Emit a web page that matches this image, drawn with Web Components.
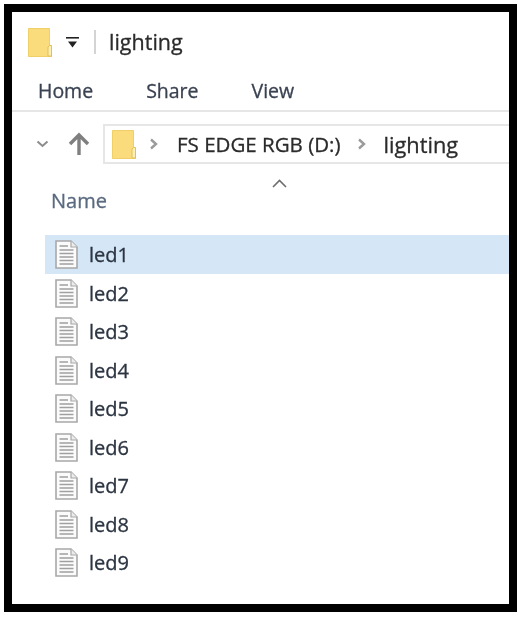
<!DOCTYPE html>
<html>
<head>
<meta charset="utf-8">
<title>lighting</title>
<style>
  html, body { margin: 0; padding: 0; background: #fff; }
  body { font-family: "Open Sans", "Noto Sans", sans-serif; color: #222; }
</style>
</head>
<body>
<explorer-frame>
  <title-bar label="lighting"></title-bar>
  <ribbon-tabs>
    <span>Home</span><span>Share</span><span>View</span>
  </ribbon-tabs>
  <address-bar drive="FS EDGE RGB (D:)" folder="lighting"></address-bar>
  <list-header>Name</list-header>
  <file-row selected>led1</file-row>
  <file-row>led2</file-row>
  <file-row>led3</file-row>
  <file-row>led4</file-row>
  <file-row>led5</file-row>
  <file-row>led6</file-row>
  <file-row>led7</file-row>
  <file-row>led8</file-row>
  <file-row>led9</file-row>
</explorer-frame>

<script>
const folderIcon = (w, h) => `
  <svg width="${w}" height="${h}" viewBox="0 0 24 29" style="display:block;flex:none">
    <path d="M0.5 0.5H21.5V24H24V28.5H0.5Z" fill="#fbdc7c" stroke="#f1cf68"/>
    <path d="M21.5 17.5H23.5V28H20V19Z" fill="#fdeeb4" stroke="#e3bf57" stroke-width="1"/>
  </svg>`;

class ExplorerFrame extends HTMLElement {
  constructor() {
    super();
    this.attachShadow({ mode: 'open' });
    this.shadowRoot.innerHTML = `
      <style>
        :host {
          display: block;
          box-sizing: border-box;
          width: 513px;
          height: 608px;
          margin: 4px 0 0 4px;
          border: 8px solid #000;
          background: #fff;
          overflow: hidden;
          filter: blur(0.45px);
          -webkit-text-stroke: 0.3px currentColor;
        }
      </style>
      <slot></slot>
    `;
  }
}

class TitleBar extends HTMLElement {
  constructor() {
    super();
    this.attachShadow({ mode: 'open' });
  }

  connectedCallback() {
    this.shadowRoot.innerHTML = `
      <style>
        :host {
          display: flex;
          align-items: center;
          height: 60px;
          padding: 0 0 0 16px;
          box-sizing: border-box;
        }
        .quick { margin-left: 14px; display: block; }
        .divider { width: 2px; height: 24px; background: #d4d4d4; margin: 0 13px 0 15px; }
        .label { font-size: 21.5px; color: #2b2b2b; position: relative; top: -1px; }
      </style>
      ${folderIcon(24, 29)}
      <svg class="quick" width="13" height="13" viewBox="0 0 13 13">
        <rect x="0" y="1" width="13" height="1.6" fill="#222"/>
        <path d="M2 5.5H11L6.5 11.5Z" fill="#222"/>
      </svg>
      <div class="divider"></div>
      <div class="label">${this.getAttribute('label')}</div>
    `;
  }
}

class RibbonTabs extends HTMLElement {
  constructor() {
    super();
    this.attachShadow({ mode: 'open' });
    this.shadowRoot.innerHTML = `
      <style>
        :host {
          display: flex;
          align-items: center;
          gap: 53px;
          height: 40px;
          padding: 0 0 2px 26px;
          box-sizing: border-box;
          border-bottom: 2px solid #e6e6e6;
          font-size: 19.5px;
          color: #3a4252;
        }
      </style>
      <slot></slot>
    `;
  }
}

class AddressBar extends HTMLElement {
  constructor() {
    super();
    this.attachShadow({ mode: 'open' });
  }

  connectedCallback() {
    const chevron = (cls) => `
      <svg class="sep ${cls}" width="9" height="12" viewBox="0 0 9 12">
        <path d="M2 1.5L7 6L2 10.5" fill="none" stroke="#9a9a9a" stroke-width="2.4"/>
      </svg>`;
    this.shadowRoot.innerHTML = `
      <style>
        :host {
          display: flex;
          align-items: center;
          height: 40px;
          margin-top: 12px;
          padding-left: 24px;
        }
        .down { margin-right: 19px; display: block; }
        .up { margin-right: 13px; display: block; }
        .box {
          flex: 1;
          display: flex;
          align-items: center;
          height: 100%;
          box-sizing: border-box;
          border: 2px solid #e6e6e6;
          border-right: 0;
          padding-left: 7px;
          font-size: 20.5px;
          color: #2b2b2b;
        }
        .sep { flex: none; }
        .first { margin: 0 19px 0 13px; }
        .second { margin: 0 18px 0 16px; }
        .folder { font-size: 21.8px; }
      </style>
      <svg class="down" width="13" height="8" viewBox="0 0 13 8">
        <path d="M1.5 1.5L6.5 6L11.5 1.5" fill="none" stroke="#8c8c8c" stroke-width="2"/>
      </svg>
      <svg class="up" width="22" height="24" viewBox="0 0 22 24">
        <path d="M11 23V3M2 12L11 3L20 12" fill="none" stroke="#7f7f7f" stroke-width="3.4"/>
      </svg>
      <div class="box">
        ${folderIcon(24, 29)}
        ${chevron('first')}
        <span>${this.getAttribute('drive')}</span>
        ${chevron('second')}
        <span class="folder">${this.getAttribute('folder')}</span>
      </div>
    `;
  }
}

class ListHeader extends HTMLElement {
  constructor() {
    super();
    this.attachShadow({ mode: 'open' });
    this.shadowRoot.innerHTML = `
      <style>
        :host {
          display: block;
          position: relative;
          height: 71px;
          box-sizing: border-box;
          padding: 23px 0 0 39px;
          font-size: 20px;
          line-height: 28px;
          color: #5a6a80;
        }
        svg { position: absolute; left: 260px; top: 15px; }
      </style>
      <slot></slot>
      <svg width="15" height="9" viewBox="0 0 15 9">
        <path d="M1 8L7.5 1.5L14 8" fill="none" stroke="#6e6e6e" stroke-width="1.6"/>
      </svg>
    `;
  }
}

class FileRow extends HTMLElement {
  constructor() {
    super();
    this.attachShadow({ mode: 'open' });
    this.shadowRoot.innerHTML = `
      <style>
        :host {
          display: flex;
          align-items: center;
          gap: 11px;
          height: 38.5px;
          margin-left: 33px;
          padding-left: 10px;
          box-sizing: border-box;
          font-size: 20px;
          color: #2b3440;
        }
        :host([selected]) { background: #d5e6f6; height: 39px; }
        svg { display: block; flex: none; }
      </style>
      <svg width="23" height="29" viewBox="0 0 23 29">
        <path d="M1 1H16L22 7V28H1Z" fill="#fbfbfb" stroke="#a8a8a8" stroke-width="1.6"/>
        <path d="M16 1V7H22" fill="#ececec" stroke="#a8a8a8" stroke-width="1.2"/>
        <path d="M4.5 6H13M4.5 10H18.5M4.5 13.5H18.5M4.5 17H18.5M4.5 20.5H18.5M4.5 24H18.5" stroke="#a0a0a0" stroke-width="1.5"/>
      </svg>
      <slot></slot>
    `;
  }
}

customElements.define('explorer-frame', ExplorerFrame);
customElements.define('title-bar', TitleBar);
customElements.define('ribbon-tabs', RibbonTabs);
customElements.define('address-bar', AddressBar);
customElements.define('list-header', ListHeader);
customElements.define('file-row', FileRow);
</script>
</body>
</html>
